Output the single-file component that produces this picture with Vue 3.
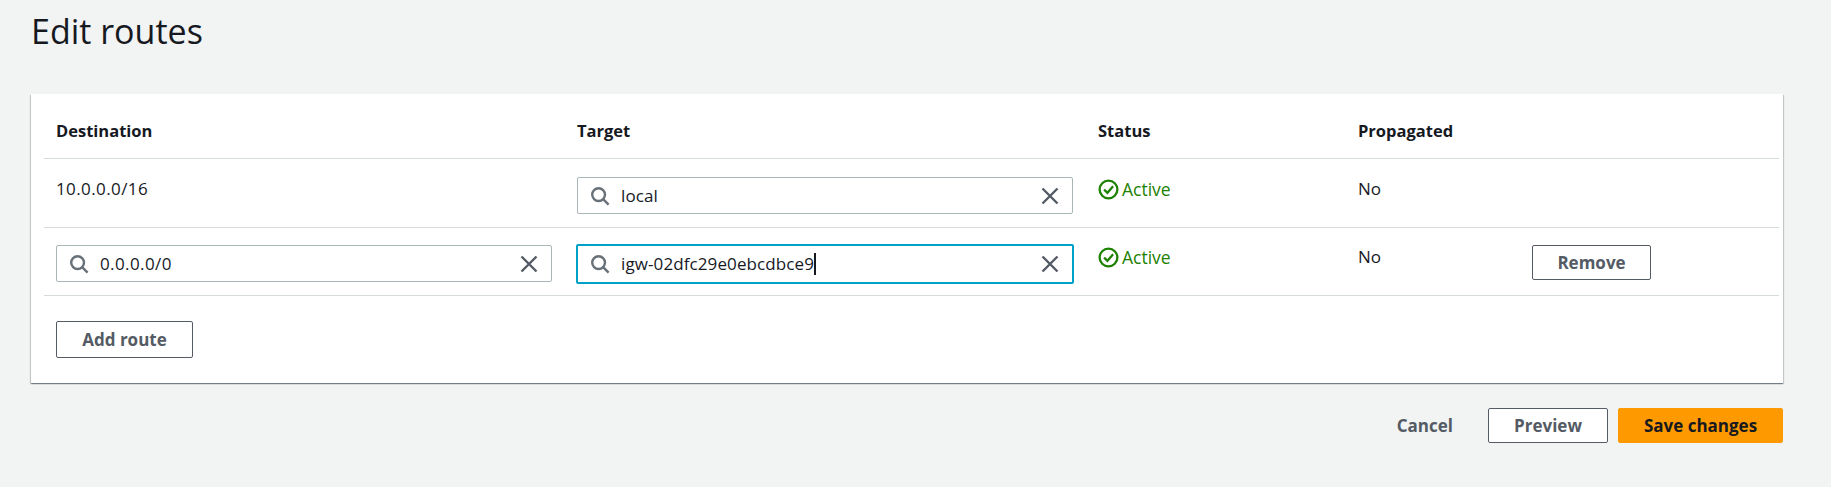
<script setup>
const routes = [
  { id: 1, destination: '10.0.0.0/16', editable: false, target: 'local', focused: false },
  { id: 2, destination: '0.0.0.0/0', editable: true, target: 'igw-02dfc29e0ebcdbce9', focused: true },
]
</script>

<template>
  <div class="page">
    <h1 class="page__title">Edit routes</h1>

    <section class="card">
      <div class="routes__row routes__row--head">
        <div>Destination</div>
        <div>Target</div>
        <div>Status</div>
        <div>Propagated</div>
        <div></div>
      </div>

      <div v-for="route in routes" :key="route.id" class="routes__row" :class="{ 'routes__row--edit': route.editable }">
        <div v-if="!route.editable" class="routes__text routes__text--ip">{{ route.destination }}</div>
        <div v-else class="field">
          <svg class="field__search" viewBox="0 0 20 20" width="20" height="20" fill="none" stroke="#687078" stroke-width="2.4">
            <circle cx="8.6" cy="8.6" r="6.4" />
            <path d="M13.4 13.4 18.6 18.6" />
          </svg>
          <span class="field__value field__value--ip">{{ route.destination }}</span>
          <svg class="field__clear" viewBox="0 0 18 18" width="18" height="18" fill="none" stroke="#545b64" stroke-width="2.4">
            <path d="M1.5 1.5 16.5 16.5M16.5 1.5 1.5 16.5" />
          </svg>
        </div>

        <div class="field" :class="{ 'field--focus': route.focused }">
          <svg class="field__search" viewBox="0 0 20 20" width="20" height="20" fill="none" stroke="#687078" stroke-width="2.4">
            <circle cx="8.6" cy="8.6" r="6.4" />
            <path d="M13.4 13.4 18.6 18.6" />
          </svg>
          <span class="field__value">{{ route.target }}<i v-if="route.focused" class="field__caret"></i></span>
          <svg class="field__clear" viewBox="0 0 18 18" width="18" height="18" fill="none" stroke="#545b64" stroke-width="2.4">
            <path d="M1.5 1.5 16.5 16.5M16.5 1.5 1.5 16.5" />
          </svg>
        </div>

        <div class="status">
          <svg viewBox="0 0 22 22" width="21" height="21" fill="none" stroke="#1d8102" stroke-width="2.4">
            <circle cx="11" cy="11" r="9.3" />
            <path d="M6.4 11.2 9.9 14.5 15.8 7.7" />
          </svg>
          <span>Active</span>
        </div>

        <div class="routes__text">No</div>

        <div>
          <button v-if="route.editable" type="button" class="btn btn--remove">Remove</button>
        </div>
      </div>

      <div class="card__foot">
        <button type="button" class="btn btn--add">Add route</button>
      </div>
    </section>

    <footer class="actions">
      <button type="button" class="btn btn--link">Cancel</button>
      <button type="button" class="btn btn--preview">Preview</button>
      <button type="button" class="btn btn--primary">Save changes</button>
    </footer>
  </div>
</template>

<style>
html,
body {
  background-color: #f2f3f3;
}
</style>

<style scoped>
.page {
  box-sizing: border-box;
  width: 1831px;
  height: 487px;
  padding: 10px 48px 0 31px;
  background-color: #f2f3f3;
  color: #16191f;
  font-family: "Open Sans", "Noto Sans", sans-serif;
  font-size: 17px;
}

.page__title {
  margin: 0;
  height: 43px;
  font-size: 34px;
  line-height: 43px;
  font-weight: 400;
}

.card {
  margin-top: 41px;
  height: 289px;
  box-sizing: border-box;
  padding: 0 4px 0 13px;
  background-color: #fff;
  box-shadow: 0 1px 1px 0 rgba(0, 28, 36, 0.35), 1px 1px 1px 0 rgba(0, 28, 36, 0.15), -1px 1px 1px 0 rgba(0, 28, 36, 0.15);
}

.routes__row {
  display: grid;
  grid-template-columns: 521px 521px 260px 174px 1fr;
  box-sizing: border-box;
  height: 69px;
  padding: 18px 0 0 12px;
  border-bottom: 1px solid #d5dbdb;
}

.routes__row--head {
  height: 65px;
  padding-top: 25px;
  font-size: 16.5px;
  font-weight: 700;
  line-height: 24px;
}

.routes__row--edit {
  height: 68px;
  padding-top: 17px;
}

.routes__text {
  line-height: 24px;
}

.routes__text--ip {
  letter-spacing: 0.4px;
}

.field {
  display: flex;
  align-items: center;
  box-sizing: border-box;
  width: 496px;
  height: 37px;
  padding: 0 13px 0 12px;
  border: 1px solid #aab7b8;
  border-radius: 2px;
}

.field--focus {
  margin: -1px 0 0 -1px;
  width: 498px;
  height: 40px;
  padding: 0 13px 0 12px;
  border: 2px solid #00a1c9;
}

.field__search {
  flex: none;
}

.field__value {
  flex: 1;
  margin-left: 11px;
  line-height: 24px;
  letter-spacing: 0.1px;
}

.field__value--ip {
  letter-spacing: 0.4px;
}

.field__caret {
  display: inline-block;
  width: 2px;
  height: 22px;
  vertical-align: -5px;
  background-color: #16191f;
}

.field__clear {
  flex: none;
}

.status {
  display: flex;
  align-items: center;
  gap: 3px;
  height: 24px;
  color: #1d8102;
  font-size: 17.5px;
}

.btn {
  box-sizing: border-box;
  border: 1px solid #545b64;
  border-radius: 2px;
  background-color: #fff;
  color: #545b64;
  font-family: inherit;
  font-size: 17px;
  font-weight: 700;
  line-height: 22px;
  padding: 0;
}

.btn--remove {
  width: 119px;
  height: 35px;
}

.card__foot {
  padding: 25px 0 0 12px;
}

.btn--add {
  width: 137px;
  height: 37px;
}

.actions {
  display: flex;
  justify-content: flex-end;
  align-items: center;
  margin-top: 25px;
  height: 35px;
}

.btn--link {
  border: none;
  background: transparent;
  margin-right: 35px;
}

.btn--preview {
  width: 120px;
  height: 35px;
  margin-right: 10px;
}

.btn--primary {
  width: 165px;
  height: 35px;
  border-color: #ff9900;
  background-color: #ff9900;
  color: #16191f;
}
</style>
